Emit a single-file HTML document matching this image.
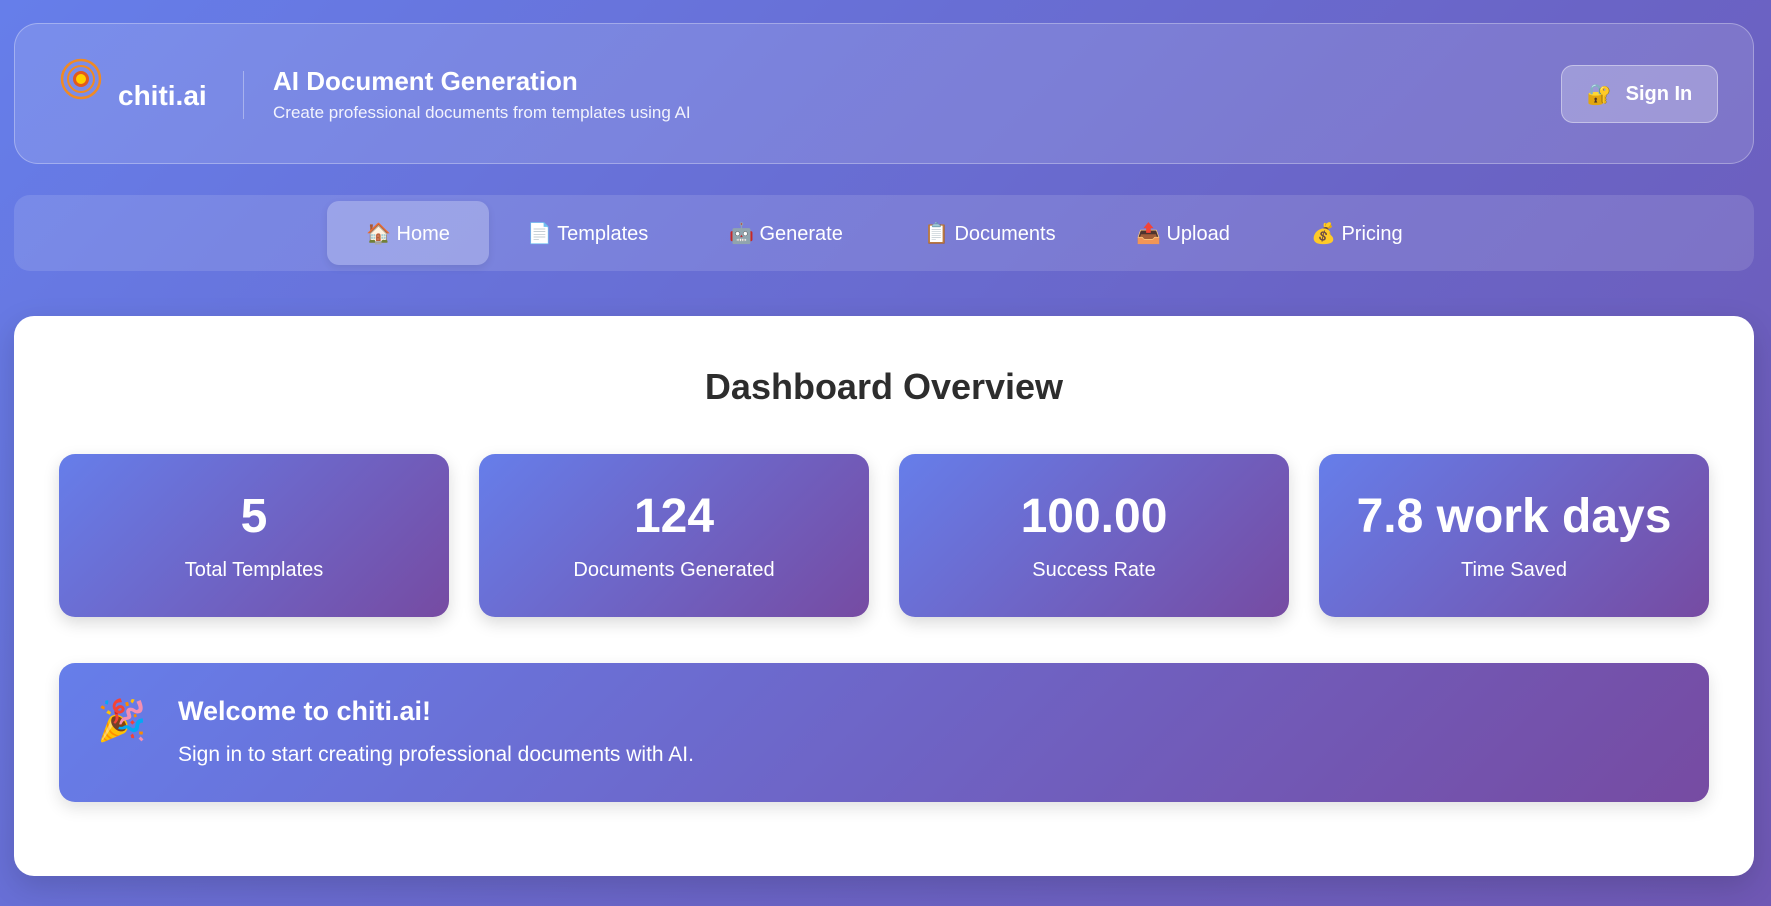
<!DOCTYPE html>
<html><head><meta charset="utf-8"><style>
*{box-sizing:border-box;margin:0;padding:0}
body{width:1771px;height:906px;overflow:hidden;font-family:"Liberation Sans","Noto Sans CJK SC",sans-serif;background:linear-gradient(135deg,#667eea 0%,#6a64c6 60%,#6f58b4 100%);position:relative;color:#fff}
.hdr{position:absolute;left:14px;top:23px;width:1740px;height:141px;border-radius:24px;background:rgba(255,255,255,0.13);border:1px solid rgba(255,255,255,0.3)}
.logo{position:absolute;left:44px;top:33px}
.brand{position:absolute;left:103px;top:56px;font-size:28px;font-weight:bold}
.div{position:absolute;left:143px;top:47px;width:1px;height:48px;background:rgba(255,255,255,0.35)}
.t1{position:absolute;left:164px;top:42px;font-size:26px;font-weight:bold}
.t2{position:absolute;left:164px;top:79px;font-size:17px;color:rgba(255,255,255,0.9)}
.sign{position:absolute;left:1546px;top:41px;width:157px;height:58px;border-radius:12px;background:rgba(255,255,255,0.25);border:1px solid rgba(255,255,255,0.4);font-weight:bold;font-size:20px;display:flex;align-items:center;justify-content:center;gap:14px}
.nav{position:absolute;left:14px;top:195px;width:1740px;height:76px;border-radius:16px;background:rgba(255,255,255,0.12)}
.ni{position:absolute;top:6px;height:64px;display:flex;align-items:center;font-size:20px;gap:10px}
.home{left:313px;width:162px;justify-content:center;background:rgba(255,255,255,0.25);border-radius:12px;box-shadow:0 3px 8px rgba(0,0,0,0.08)}
.main{position:absolute;left:14px;top:316px;width:1740px;height:560px;background:#fff;border-radius:20px;box-shadow:0 10px 30px rgba(0,0,0,0.15)}
h2{position:absolute;left:0;width:100%;text-align:center;top:50px;font-size:36px;color:#2d2d2d;font-weight:bold}
.card{position:absolute;top:138px;width:390px;height:163px;border-radius:16px;background:linear-gradient(135deg,#667eea,#764ba2);box-shadow:0 6px 16px rgba(0,0,0,0.15);text-align:center}
.card .n{font-size:48px;font-weight:bold;margin-top:36px;line-height:54px}
.card .l{font-size:20px;margin-top:15px}
.wel{position:absolute;left:45px;top:347px;width:1650px;height:139px;border-radius:16px;background:linear-gradient(135deg,#667eea,#764ba2);box-shadow:0 6px 16px rgba(0,0,0,0.12)}
</style></head><body>
<div class="hdr">
<svg class="logo" width="48" height="48" viewBox="0 0 48 48"><circle cx="22" cy="22" r="19" fill="none" stroke="#f08a24" stroke-width="2.5"/><circle cx="22" cy="22" r="13" fill="none" stroke="#f08a24" stroke-width="2"/><circle cx="22" cy="22" r="8" fill="#e3591c"/><circle cx="22" cy="22" r="5" fill="#ffd000"/></svg>
<div class="brand">chiti.ai</div>
<div class="div" style="left:228px"></div>
<div class="t1" style="left:258px">AI Document Generation</div>
<div class="t2" style="left:258px">Create professional documents from templates using AI</div>
<div class="sign"><span>🔐</span>Sign In</div>
</div>
<div class="nav">
<div class="ni home">🏠 Home</div>
<div class="ni" style="left:513px">📄 Templates</div>
<div class="ni" style="left:715px">🤖 Generate</div>
<div class="ni" style="left:910px">📋 Documents</div>
<div class="ni" style="left:1122px">📤 Upload</div>
<div class="ni" style="left:1297px">💰 Pricing</div>
</div>
<div class="main">
<h2>Dashboard Overview</h2>
<div class="card" style="left:45px"><div class="n">5</div><div class="l">Total Templates</div></div>
<div class="card" style="left:465px"><div class="n">124</div><div class="l">Documents Generated</div></div>
<div class="card" style="left:885px"><div class="n">100.00</div><div class="l">Success Rate</div></div>
<div class="card" style="left:1305px"><div class="n">7.8 work days</div><div class="l">Time Saved</div></div>
<div class="wel">
<div style="position:absolute;left:38px;top:34px;font-size:40px">🎉</div>
<div style="position:absolute;left:119px;top:33px;font-size:27px;font-weight:bold">Welcome to chiti.ai!</div>
<div style="position:absolute;left:119px;top:80px;font-size:21px">Sign in to start creating professional documents with AI.</div>
</div>
</div>
</body></html>
